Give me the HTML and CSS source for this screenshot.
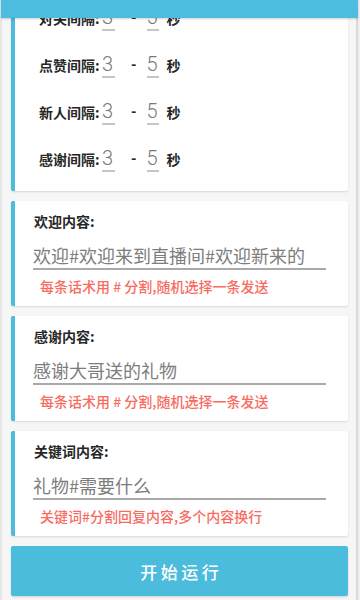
FILE: index.html
```html
<!DOCTYPE html>
<html lang="zh">
<head>
<meta charset="utf-8">
<meta name="viewport" content="width=360">
<title>设置</title>
<link rel="stylesheet" href="styles.css">
</head>
<body>
<div class="page">
  <header class="topbar"></header>
  <main class="content">
    <section class="card card-rows">
      <div class="row"><span class="label">对关间隔:</span><span class="num n1">3</span><span class="dash">-</span><span class="num n2">5</span><span class="unit">秒</span></div>
      <div class="row"><span class="label">点赞间隔:</span><span class="num n1">3</span><span class="dash">-</span><span class="num n2">5</span><span class="unit">秒</span></div>
      <div class="row"><span class="label">新人间隔:</span><span class="num n1">3</span><span class="dash">-</span><span class="num n2">5</span><span class="unit">秒</span></div>
      <div class="row"><span class="label">感谢间隔:</span><span class="num n1">3</span><span class="dash">-</span><span class="num n2">5</span><span class="unit">秒</span></div>
    </section>
    <section class="card tcard">
      <div class="tlabel">欢迎内容:</div>
      <div class="tinput">欢迎#欢迎来到直播间#欢迎新来的</div>
      <div class="hint">每条话术用 # 分割,随机选择一条发送</div>
    </section>
    <section class="card tcard">
      <div class="tlabel">感谢内容:</div>
      <div class="tinput">感谢大哥送的礼物</div>
      <div class="hint">每条话术用 # 分割,随机选择一条发送</div>
    </section>
    <section class="card tcard">
      <div class="tlabel">关键词内容:</div>
      <div class="tinput">礼物#需要什么</div>
      <div class="hint">关键词#分割回复内容,多个内容换行</div>
    </section>
    <button class="run" type="button">开始运行</button>
  </main>
</div>
</body>
</html>
```
FILE: styles.css
```css
* { box-sizing: border-box; }
html, body {
  margin: 0;
  padding: 0;
  background: #f6f6f6;
  font-family: Roboto, "Noto Sans CJK SC", sans-serif;
  overflow: hidden;
}
.page {
  width: 360px;
  height: 600px;
  border-left: 2px solid #e6e6e6;
  border-right: 2px solid #eeeeee;
  box-shadow: inset -2px 0 0 #d8d8d8;
  padding: 0 10px 0 9px;
  overflow: hidden;
}
.topbar {
  position: fixed;
  top: 0;
  left: 1px;
  width: 357px;
  height: 18px;
  background: #4dbddf;
  box-shadow: 0 1px 2px rgba(0,0,0,0.18);
  z-index: 5;
}
.content {
  display: flex;
  flex-direction: column;
  gap: 10px;
  margin-top: -16px;
  width: 337px;
}
.card {
  background: #fff;
  border-left: 4px solid #4bbcdc;
  border-radius: 2px;
  box-shadow: 0 1px 2px rgba(0,0,0,0.12);
}
.card-rows {
  padding: 10px 0 9px 24px;
}
.row {
  display: flex;
  align-items: center;
  height: 47px;
}
.label, .tlabel {
  font-family: "Noto Sans CJK SC", sans-serif;
  font-size: 14px;
  font-weight: 700;
  color: #262626;
  white-space: nowrap;
}
.label { flex: none; width: 59px; }
.num {
  display: block;
  flex: none;
  font-family: Roboto, sans-serif;
  font-weight: 300;
  font-size: 20px;
  line-height: 24px;
  color: #7a7a7a;
  border-bottom: 2px solid #c6c6c6;
}
.n1 { margin-left: 4px; width: 13px; }
.n2 { margin-left: 10px; width: 12px; }
.dash {
  margin-left: 16px;
  font-size: 14px;
  font-weight: 700;
  color: #262626;
}
.unit {
  margin-left: 8px;
  font-family: "Noto Sans CJK SC", sans-serif;
  font-size: 14px;
  font-weight: 700;
  color: #262626;
}
.tcard {
  height: 105px;
  padding: 10px 0 0 18px;
}
.tlabel {
  margin-left: 1px;
  line-height: 21px;
}
.tinput {
  margin-top: 10px;
  width: 293px;
  height: 28px;
  font-family: "Noto Sans CJK SC", sans-serif;
  font-size: 18px;
  line-height: 26px;
  color: #7d7d7d;
  border-bottom: 2px solid #a9a9a9;
  white-space: nowrap;
  overflow: hidden;
}
.hint {
  margin: 6px 0 0 7px;
  font-family: "Noto Sans CJK SC", sans-serif;
  font-size: 14px;
  font-weight: 500;
  line-height: 20px;
  color: #f86c5f;
}
.run {
  display: block;
  width: 337px;
  height: 50px;
  border: 0;
  border-radius: 2px;
  background: #4bbcdc;
  color: #fff;
  font-family: "Noto Sans CJK SC", sans-serif;
  font-size: 17px;
  font-weight: 500;
  letter-spacing: 3.5px;
  text-indent: 3.5px;
  padding: 0;
  box-shadow: 0 1px 2px rgba(0,0,0,0.15);
}
```
